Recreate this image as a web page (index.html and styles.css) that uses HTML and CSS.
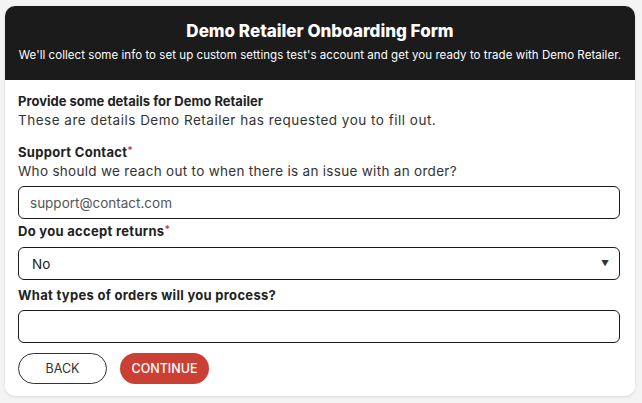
FILE: index.html
```html
<!DOCTYPE html>
<html>

<head>
    <meta charset="utf-8">
    <title>Demo Retailer Onboarding Form</title>
    <link rel="stylesheet" href="styles.css">
</head>

<body>
    <div class="card">
        <div class="card-head">
            <h1>Demo Retailer Onboarding Form</h1>
            <p>We'll collect some info to set up custom settings test's account and get you ready to trade with Demo Retailer.</p>
        </div>
        <form class="card-body">
            <div class="intro">
                <h2>Provide some details for Demo Retailer</h2>
                <p>These are details Demo Retailer has requested you to fill out.</p>
            </div>

            <div class="field first">
                <label>Support Contact<span class="req">*</span></label>
                <p class="hint">Who should we reach out to when there is an issue with an order?</p>
                <input type="text" placeholder="support@contact.com">
            </div>

            <div class="field">
                <label>Do you accept returns<span class="req">*</span></label>
                <div class="select-wrap">
                    <select>
                        <option>No</option>
                        <option>Yes</option>
                    </select>
                </div>
            </div>

            <div class="field last">
                <label>What types of orders will you process?</label>
                <input type="text">
            </div>

            <div class="actions">
                <button type="button" class="btn btn-back">BACK</button>
                <button type="button" class="btn btn-next">CONTINUE</button>
            </div>
        </form>
    </div>
</body>

</html>
```

FILE: styles.css
```css
*{
    padding: 0;
    margin: 0;
    box-sizing: border-box;
}
html,body{
    width: 100%;
    height: 100%;
}
body{
    background-color: #f4f4f4;
    font-family: Inter, "Noto Sans", sans-serif;
    color: #222;
    padding: 6px 7px 0 5px;
}
.card{
    background-color: #fff;
    border-radius: 10px;
    overflow: hidden;
    box-shadow: 0 1px 3px rgba(0, 0, 0, 0.12);
}
.card-head{
    background-color: #1b1b1b;
    color: #fff;
    text-align: center;
    padding: 13px 10px 16px;
}
.card-head h1{
    font-size: 17px;
    line-height: 24px;
    font-weight: 800;
}
.card-head p{
    margin-top: 3px;
    font-size: 11.5px;
    line-height: 18px;
    letter-spacing: 0.05px;
}
.card-body{
    display: flex;
    flex-direction: column;
    padding: 12px 15px 12px 13px;
}
.intro h2{
    font-size: 13px;
    line-height: 19px;
    font-weight: 700;
}
.intro p{
    font-size: 13.5px;
    line-height: 19px;
    color: #333;
    letter-spacing: 0.5px;
}
.field{
    display: flex;
    flex-direction: column;
    margin-top: 3px;
}
.field.first{
    margin-top: 13px;
}
.field.last{
    margin-top: 6px;
}
.field label{
    font-size: 13px;
    line-height: 19px;
    font-weight: 700;
    letter-spacing: 0.3px;
    margin-bottom: 6px;
}
.field.first label{
    margin-bottom: 0;
}
.field.last label{
    margin-bottom: 5px;
}
.field .hint{
    font-size: 13.5px;
    line-height: 19px;
    color: #333;
    letter-spacing: 0.3px;
    margin-bottom: 5px;
}
.req{
    color: #cb3f35;
    font-size: 10px;
    vertical-align: top;
    line-height: 14px;
}
.field input,
.field select{
    width: 100%;
    height: 33px;
    border: 1px solid #1b1b1b;
    border-radius: 6px;
    padding: 0 11px;
    font-family: inherit;
    font-size: 13.5px;
    color: #222;
    background-color: #fff;
    outline: none;
}
.field input::placeholder{
    color: #555;
}
.field select{
    appearance: none;
    -webkit-appearance: none;
    padding-left: 13px;
}
.select-wrap{
    position: relative;
}
.select-wrap::after{
    content: "\25BC";
    position: absolute;
    right: 11px;
    top: 11px;
    font-size: 8px;
    color: #333;
    pointer-events: none;
}
.actions{
    display: flex;
    gap: 13px;
    margin-top: 10px;
}
.btn{
    width: 89px;
    height: 31px;
    border-radius: 16px;
    font-family: inherit;
    font-size: 12.5px;
    cursor: pointer;
}
.btn-back{
    background-color: #fff;
    border: 1px solid #333;
    color: #333;
}
.btn-next{
    background-color: #cb3f35;
    border: none;
    color: #fff;
    font-weight: 500;
}
```
